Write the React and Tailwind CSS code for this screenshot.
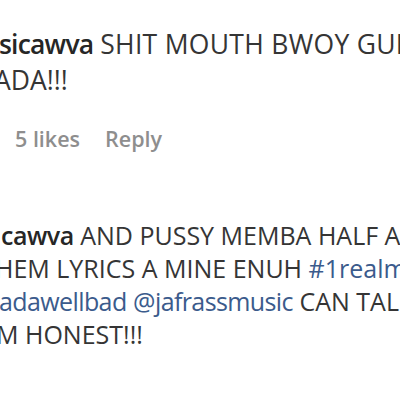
import React from "react";

const Line = ({ className = "", children }) => (
  <div className={`whitespace-nowrap ${className}`}>{children}</div>
);

const Link = ({ className = "", children }) => (
  <span className={`text-[#3b5b8c] ${className}`}>{children}</span>
);

export default function App() {
  return (
    <div
      className="w-[400px] h-[400px] overflow-hidden bg-white text-[#353535]"
      style={{ fontFamily: '"Open Sans", "Noto Sans", sans-serif' }}
    >
      {/* premier commentaire */}
      <div className="pt-[26px] text-[26.5px] leading-[36px]">
        <Line className="-ml-[1px]">
          <span className="font-semibold text-[#262626] tracking-[-0.8px]">sicawva</span>{" "}
          <span className="tracking-[0.3px]">SHIT MOUTH BWOY GUH</span>
        </Line>
        <Line className="-ml-[6px]">ADA!!!</Line>
      </div>

      <div className="mt-[27px] flex gap-[25px] pl-[15px] h-[28px] leading-[28px] text-[21.5px] font-semibold text-[#8e8e8e]">
        <span>5 likes</span>
        <span>Reply</span>
      </div>

      {/* deuxième commentaire */}
      <div className="mt-[66px] text-[25px] leading-[33px]">
        <Line className="ml-[1px]">
          <span className="font-semibold text-[#262626] tracking-[-0.5px]">cawva</span> AND PUSSY MEMBA HALF A
        </Line>
        <Line className="-ml-[5px]">
          HEM LYRICS A MINE ENUH <Link>#1realm</Link>
        </Line>
        <Line className="-ml-[1px]">
          <Link className="tracking-[-0.6px]">adawellbad</Link>{" "}
          <Link className="tracking-[-0.6px]">@jafrassmusic</Link> CAN TAL
        </Line>
        <Line className="-ml-[4px]">M HONEST!!!</Line>
      </div>
    </div>
  );
}
